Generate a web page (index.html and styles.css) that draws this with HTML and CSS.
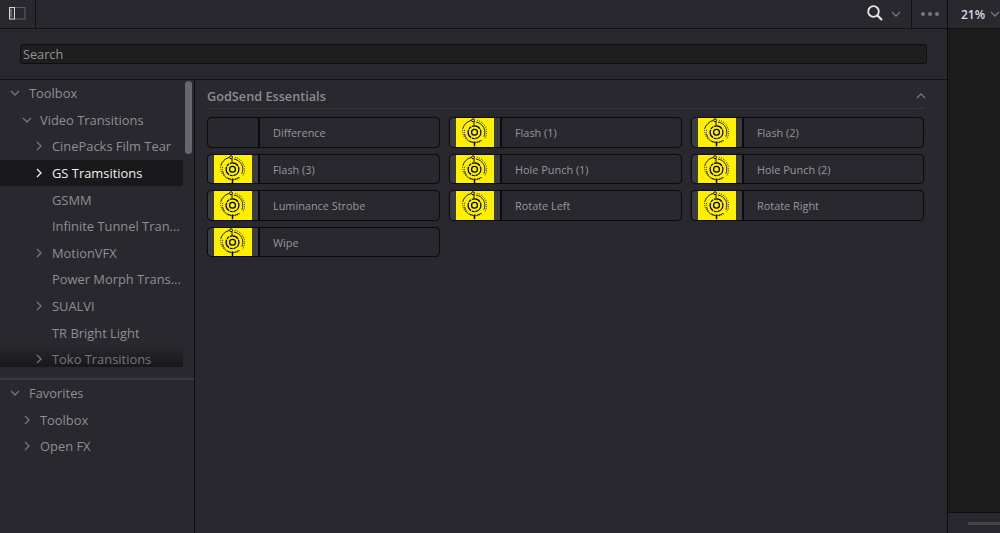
FILE: index.html
```html
<!DOCTYPE html>
<html lang="en">
<head>
<meta charset="utf-8">
<title>Effects</title>
<link rel="stylesheet" href="styles.css">
</head>
<body>
<svg class="defs" width="0" height="0" aria-hidden="true">
  <defs>
    <symbol id="logo" viewBox="0 0 38 29">
      <path d="M21 2.300A12.500 12.500 0 0 1 29 21" fill="none" stroke="#000" stroke-width=".8" stroke-dasharray="1.200 1"/>
      <path d="M26 23A12.500 12.500 0 0 1 6.500 11" fill="none" stroke="#000" stroke-width=".8" stroke-dasharray="1.200 1"/>
      <path d="M6.500 11A12.500 12.500 0 0 1 15 2.500" fill="none" stroke="#000" stroke-width=".9"/>
      <path d="M20 4.100A10.500 10.500 0 0 1 28 19" fill="none" stroke="#000" stroke-width=".9"/>
      <path d="M25 22.800A10.500 10.500 0 0 1 8.500 12" fill="none" stroke="#000" stroke-width=".9" stroke-dasharray="5 1 1 1"/>
      <circle cx="18.500" cy="14.500" r="6.500" fill="none" stroke="#000" stroke-width="1.300" stroke-dasharray="9 .8 3 .8"/>
      <circle cx="18.500" cy="14.500" r="3" fill="none" stroke="#000" stroke-width="1.300"/>
      <circle cx="17" cy="2.300" r="1.500" fill="#fff000" stroke="#000" stroke-width="1"/>
      <path d="M18 3.500v4" stroke="#000" stroke-width="1"/>
      <path d="M18.500 24v5" stroke="#000" stroke-width="1.500"/>
    </symbol>
    <symbol id="right" viewBox="0 0 10 10"><path d="M3 1l4 4-4 4" fill="none" stroke="currentColor" stroke-width="1.300"/></symbol>
    <symbol id="down" viewBox="0 0 10 10"><path d="M1 3l4 4 4-4" fill="none" stroke="currentColor" stroke-width="1.300"/></symbol>
  </defs>
</svg>
<div class="app">
  <div class="main">
    <header class="topbar">
      <div class="panel-toggle">
        <svg width="18" height="14" viewBox="0 0 18 14"><rect x=".5" y=".5" width="15.500" height="11.500" fill="none" stroke="#5e5e62"/><rect x=".5" y=".5" width="5" height="11.500" fill="#33343a" stroke="#d4d4d4"/><path d="M2 2v8" stroke="#9a9a9a"/></svg>
      </div>
      <div class="top-spacer"></div>
      <div class="search-tools">
        <svg class="mag" width="18" height="18" viewBox="0 0 18 18"><circle cx="7.500" cy="7.500" r="5.300" fill="none" stroke="#e8e8e8" stroke-width="1.800"/><path d="M11.500 11.500l4.500 4.500" stroke="#e8e8e8" stroke-width="2.200"/></svg>
        <svg class="chev-top" width="10" height="10"><use href="#down"/></svg>
      </div>
      <div class="dots"><i></i><i></i><i></i></div>
    </header>
    <div class="searchbar">
      <div class="searchbox">Search</div>
    </div>
    <div class="body">
      <aside class="sidebar">
        <div class="tree">
          <div class="row l0"><svg class="chev" width="10" height="10"><use href="#down"/></svg><span>Toolbox</span></div>
          <div class="row l1"><svg class="chev" width="10" height="10"><use href="#down"/></svg><span>Video Transitions</span></div>
          <div class="row l2"><svg class="chev" width="10" height="10"><use href="#right"/></svg><span>CinePacks Film Tear</span></div>
          <div class="row l2 selected"><svg class="chev" width="10" height="10"><use href="#right"/></svg><span>GS Tramsitions</span></div>
          <div class="row l2 plain"><span>GSMM</span></div>
          <div class="row l2 plain"><span>Infinite Tunnel Tran...</span></div>
          <div class="row l2"><svg class="chev" width="10" height="10"><use href="#right"/></svg><span>MotionVFX</span></div>
          <div class="row l2 plain"><span>Power Morph Trans...</span></div>
          <div class="row l2"><svg class="chev" width="10" height="10"><use href="#right"/></svg><span>SUALVI</span></div>
          <div class="row l2 plain"><span>TR Bright Light</span></div>
          <div class="row l2 faded"><svg class="chev" width="10" height="10"><use href="#right"/></svg><span>Toko Transitions</span></div>
          <div class="scrollthumb"></div>
        </div>
        <div class="favorites">
          <div class="row l0"><svg class="chev" width="10" height="10"><use href="#down"/></svg><span>Favorites</span></div>
          <div class="row l1"><svg class="chev" width="10" height="10"><use href="#right"/></svg><span>Toolbox</span></div>
          <div class="row l1"><svg class="chev" width="10" height="10"><use href="#right"/></svg><span>Open FX</span></div>
        </div>
      </aside>
      <main class="content">
        <div class="section-head">
          <h2>GodSend Essentials</h2>
          <svg class="collapse" width="10" height="10" viewBox="0 0 10 10"><path d="M1 7l4-4 4 4" fill="none" stroke="currentColor" stroke-width="1.300"/></svg>
        </div>
        <div class="grid">
          <div class="card"><div class="thumb empty"></div><div class="label">Difference</div></div>
          <div class="card"><div class="thumb"><svg class="logo"><use href="#logo"/></svg></div><div class="label">Flash (1)</div></div>
          <div class="card"><div class="thumb"><svg class="logo"><use href="#logo"/></svg></div><div class="label">Flash (2)</div></div>
          <div class="card"><div class="thumb"><svg class="logo"><use href="#logo"/></svg></div><div class="label">Flash (3)</div></div>
          <div class="card"><div class="thumb"><svg class="logo"><use href="#logo"/></svg></div><div class="label">Hole Punch (1)</div></div>
          <div class="card"><div class="thumb"><svg class="logo"><use href="#logo"/></svg></div><div class="label">Hole Punch (2)</div></div>
          <div class="card"><div class="thumb"><svg class="logo"><use href="#logo"/></svg></div><div class="label">Luminance Strobe</div></div>
          <div class="card"><div class="thumb"><svg class="logo"><use href="#logo"/></svg></div><div class="label">Rotate Left</div></div>
          <div class="card"><div class="thumb"><svg class="logo"><use href="#logo"/></svg></div><div class="label">Rotate Right</div></div>
          <div class="card"><div class="thumb"><svg class="logo"><use href="#logo"/></svg></div><div class="label">Wipe</div></div>
        </div>
      </main>
    </div>
  </div>
  <div class="side">
    <div class="zoom"><span>21%</span><svg class="zoom-chev" width="10" height="10"><use href="#down"/></svg></div>
    <div class="viewer"></div>
    <div class="side-foot"><div class="hscroll"></div></div>
  </div>
</div>
</body>
</html>
```
FILE: styles.css
```css
* { box-sizing: border-box; }
html, body { margin: 0; height: 100%; overflow: hidden; background: #28282e; }
body { font-family: "Open Sans", "Noto Sans", sans-serif; font-size: 12.900px; color: #8f8f90; }
.defs { position: absolute; }
.app { display: flex; height: 533px; width: 1000px; }
.main { width: 948px; display: flex; flex-direction: column; border-right: 1px solid #0d0d0f; }

.topbar { height: 29px; display: flex; align-items: center; border-bottom: 1px solid #111113; }
.panel-toggle { width: 36px; height: 28px; display: flex; align-items: center; justify-content: center; border-right: 1px solid #111113; }
.top-spacer { flex: 1; }
.search-tools { display: flex; align-items: center; width: 45px; height: 28px; border-right: 1px solid #111113; gap: 7px; }
.mag { margin-top: -2px; margin-left: -1px; }
.chev-top { color: #77777a; }
.dots { width: 35px; display: flex; align-items: center; justify-content: center; gap: 3px; }
.dots i { width: 4px; height: 4px; border-radius: 50%; background: #77777a; }

.searchbar { height: 51px; padding: 15px 20px 0 20px; border-bottom: 1px solid #111113; }
.searchbox { width: 907px; height: 20px; background: #1e1e1f; border: 1px solid #0f0f10; border-radius: 3px; padding-left: 2px; line-height: 18px; font-size: 12.700px; color: #90949c; }

.body { flex: 1; display: flex; min-height: 0; }
.sidebar { width: 195px; border-right: 1px solid #0f0f11; display: flex; flex-direction: column; }
.tree { position: relative; height: 300px; border-bottom: 2px solid #3a3a3e; }
.row { height: 26.600px; display: flex; align-items: center; white-space: nowrap; }
.chev { flex: none; color: #77777a; }
.l0 { padding-left: 10px; }
.l0 span { margin-left: 9px; }
.l1 { padding-left: 22px; }
.l1 span { margin-left: 8px; }
.l2 { padding-left: 34px; width: 183px; }
.l2 span { margin-left: 8px; }
.l2.plain { padding-left: 52px; }
.l2.plain span { margin-left: 0; }
.selected { background: #19191b; color: #f0f0f0; }
.selected .chev { color: #f0f0f0; }
.selected span { font-weight: 500; }
.faded { background: linear-gradient(#28282e, #18181a) no-repeat 0 0 / 100% 21px; color: #77777a; }
.scrollthumb { position: absolute; left: 185px; top: 1px; width: 7px; height: 73px; border-radius: 4px; background: #64676c; }

.content { flex: 1; padding: 0 22px 0 12px; }
.section-head { height: 29px; margin-bottom: 8px; display: flex; align-items: center; justify-content: space-between; padding: 4px 0 0 0; border-bottom: 1px solid #36363a; }
.section-head h2 { margin: 0; font-size: 12.700px; font-weight: 600; color: #8c8c8e; }
.collapse { color: #77777a; margin-right: -1px; }
.grid { display: grid; grid-template-columns: repeat(3, 233px); grid-auto-rows: 30.500px; gap: 6px 9px; }
.card { display: flex; border: 1px solid #0c0c0e; border-radius: 5px; overflow: hidden; background: #28282e; box-shadow: 0 0 1px #0c0c0e; }
.thumb { width: 52px; flex: none; border-right: 2px solid #0c0c0e; display: flex; padding-left: 6px; background: #3b3c42; }
.thumb.empty { background: transparent; }
.logo { width: 38px; height: 100%; background: #fff000; display: block; filter: blur(.3px); }
.label { padding-left: 13px; line-height: 29px; font-size: 10.900px; color: #979799; }

.side { flex: 1; display: flex; flex-direction: column; }
.zoom { height: 29px; display: flex; align-items: center; padding-left: 13px; gap: 5px; border-bottom: 1px solid #111113; font-size: 12px; font-weight: 600; color: #d8dde2; }
.zoom-chev { color: #77777a; flex: none; }
.viewer { height: 484px; background: #1c1c1d; border-bottom: 1px solid #101012; }
.side-foot { flex: 1; padding-top: 9px; padding-left: 20px; }
.hscroll { height: 3px; background: #45464a; }
```
